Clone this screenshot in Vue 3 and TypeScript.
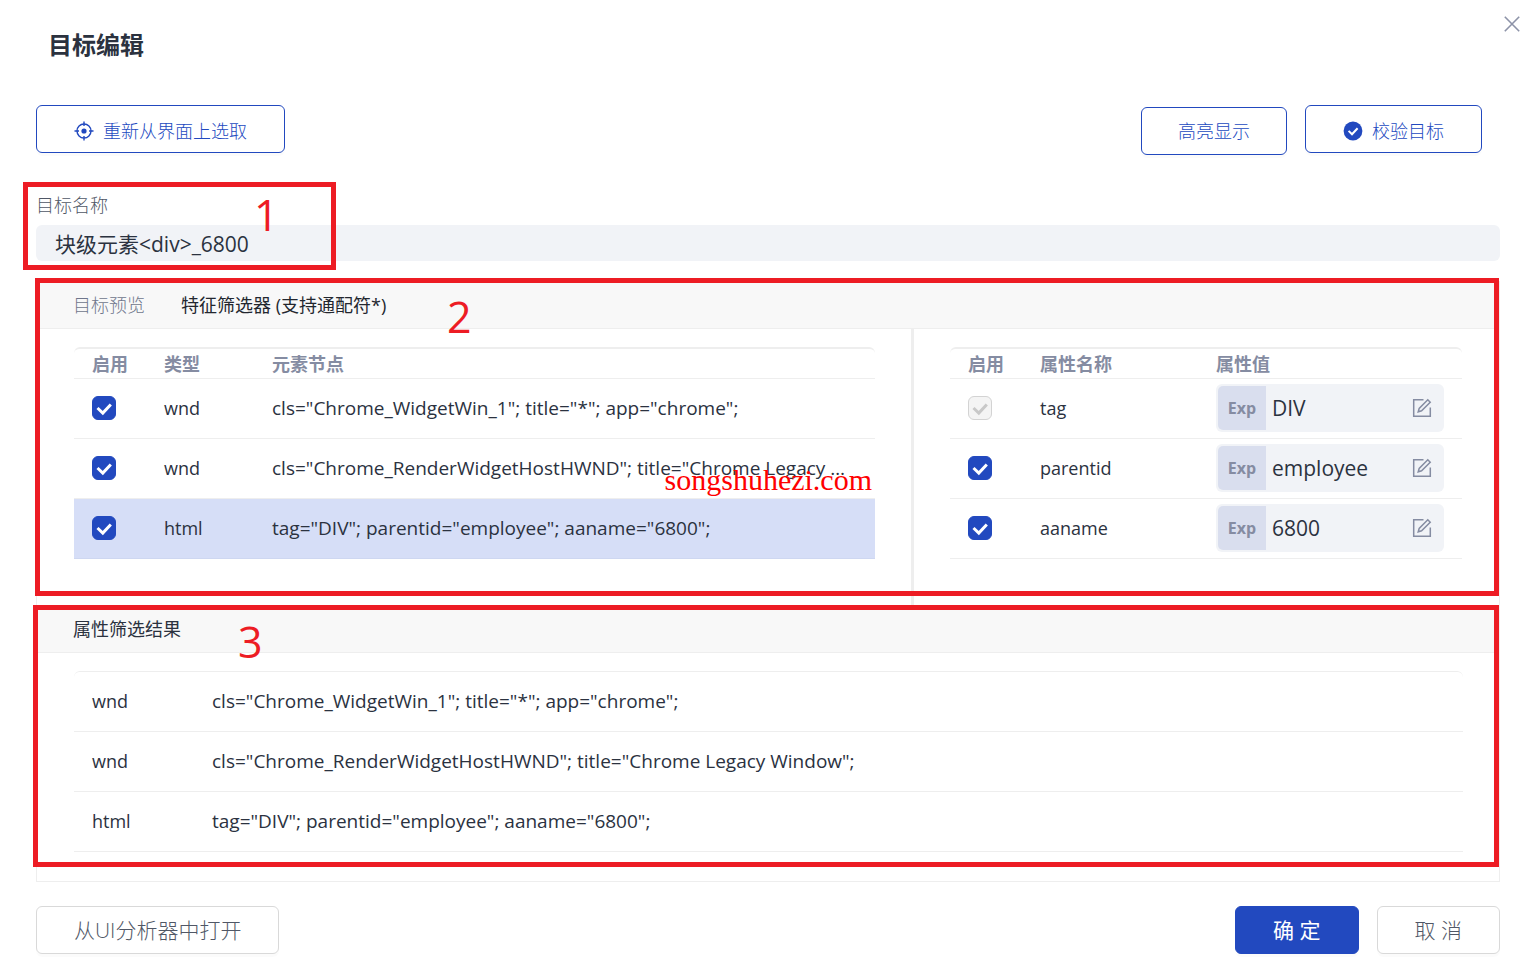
<script setup lang="ts">
import { ref } from 'vue'

interface NodeRow {
  enabled: boolean
  type: string
  selector: string
}

interface AttributeRow {
  enabled: boolean
  locked: boolean
  name: string
  value: string
}

const targetName = ref('块级元素<div>_6800')
const selectedRow = ref(2)

const nodes = ref<NodeRow[]>([
  { enabled: true, type: 'wnd', selector: 'cls="Chrome_WidgetWin_1"; title="*"; app="chrome";' },
  { enabled: true, type: 'wnd', selector: 'cls="Chrome_RenderWidgetHostHWND"; title="Chrome Legacy Window";' },
  { enabled: true, type: 'html', selector: 'tag="DIV"; parentid="employee"; aaname="6800";' },
])

const attributes = ref<AttributeRow[]>([
  { enabled: true, locked: true, name: 'tag', value: 'DIV' },
  { enabled: true, locked: false, name: 'parentid', value: 'employee' },
  { enabled: true, locked: false, name: 'aaname', value: '6800' },
])
</script>

<template>
  <main class="dialog">
    <button class="close" type="button" aria-label="关闭">
      <svg width="16" height="16" viewBox="0 0 16 16" fill="none" stroke="currentColor" stroke-width="1.6">
        <path d="M.8.8 15.2 15.2M15.2.8.8 15.2" />
      </svg>
    </button>

    <h1 class="title">目标编辑</h1>

    <div class="toolbar">
      <button class="btn btn-outline with-icon" type="button">
        <svg width="20" height="20" viewBox="0 0 20 20" fill="none" stroke="currentColor" stroke-width="1.4">
          <circle cx="10" cy="10" r="7" />
          <circle cx="10" cy="10" r="2.6" fill="currentColor" stroke="none" />
          <path d="M10 .5v4.5M10 15v4.5M.5 10H5M15 10h4.5" />
        </svg>
        <span>重新从界面上选取</span>
      </button>
      <div class="toolbar-right">
        <button class="btn btn-outline" type="button"><span>高亮显示</span></button>
        <button class="btn btn-outline with-icon" type="button">
          <svg width="20" height="20" viewBox="0 0 20 20">
            <circle cx="10" cy="10" r="9.4" fill="currentColor" />
            <path d="M5.6 9.9 9 13.2 14.6 7.2" fill="none" stroke="#fff" stroke-width="2" />
          </svg>
          <span>校验目标</span>
        </button>
      </div>
    </div>

    <div class="field">
      <label for="target-name">目标名称</label>
      <input id="target-name" v-model="targetName" type="text" />
      <div class="mark mark-name"><span>1</span></div>
    </div>

    <div class="panel">
      <section class="filter">
        <div class="panel-head" role="tablist">
          <button class="tab" type="button" role="tab" aria-selected="false">目标预览</button>
          <button class="tab active" type="button" role="tab" aria-selected="true">特征筛选器 (支持通配符*)</button>
        </div>
        <div class="split">
          <div class="pane">
            <table class="grid nodes">
              <thead>
                <tr>
                  <th class="c-check">启用</th>
                  <th class="c-type">类型</th>
                  <th>元素节点</th>
                </tr>
              </thead>
              <tbody>
                <tr
                  v-for="(row, i) in nodes"
                  :key="i"
                  :class="{ selected: i === selectedRow }"
                  @click="selectedRow = i"
                >
                  <td>
                    <span class="check">
                      <input v-model="row.enabled" type="checkbox" :aria-label="row.selector" />
                      <svg viewBox="0 0 24 24"><path d="M5.5 12 10.8 17 18.8 8.4" /></svg>
                    </span>
                  </td>
                  <td>{{ row.type }}</td>
                  <td class="selector">{{ row.selector }}</td>
                </tr>
              </tbody>
            </table>
            <div class="watermark">songshuhezi.com</div>
          </div>
          <div class="pane">
            <table class="grid attributes">
              <thead>
                <tr>
                  <th class="c-check">启用</th>
                  <th class="c-name">属性名称</th>
                  <th>属性值</th>
                </tr>
              </thead>
              <tbody>
                <tr v-for="row in attributes" :key="row.name">
                  <td>
                    <span class="check">
                      <input v-model="row.enabled" type="checkbox" :disabled="row.locked" :aria-label="row.name" />
                      <svg viewBox="0 0 24 24"><path d="M5.5 12 10.8 17 18.8 8.4" /></svg>
                    </span>
                  </td>
                  <td>{{ row.name }}</td>
                  <td>
                    <div class="expression">
                      <span class="exp">Exp</span>
                      <input v-model="row.value" type="text" :aria-label="row.name" />
                      <button type="button" aria-label="编辑">
                        <svg width="20" height="20" viewBox="0 0 20 20" fill="none" stroke="currentColor" stroke-width="1.5">
                          <path d="M11.5 1.7H1.7v16.6h16.6V9.5" />
                          <path d="M15.8 1.8 7.2 10.4 6.2 13.8 9.6 12.8 18.2 4.2Z" />
                        </svg>
                      </button>
                    </div>
                  </td>
                </tr>
              </tbody>
            </table>
          </div>
        </div>
        <div class="mark mark-filter"><span>2</span></div>
      </section>

      <section class="results">
        <div class="panel-head">
          <h2>属性筛选结果</h2>
        </div>
        <div class="pane">
          <table class="grid result-grid">
            <tbody>
              <tr v-for="(row, i) in nodes" :key="i">
                <td class="c-result">{{ row.type }}</td>
                <td class="selector">{{ row.selector }}</td>
              </tr>
            </tbody>
          </table>
        </div>
        <div class="mark mark-results"><span>3</span></div>
      </section>
    </div>

    <footer class="footer">
      <button class="btn btn-plain" type="button">从UI分析器中打开</button>
      <div class="footer-right">
        <button class="btn btn-primary" type="button">确 定</button>
        <button class="btn btn-plain" type="button">取 消</button>
      </div>
    </footer>
  </main>
</template>

<style>
body {
  background: #fff;
}
</style>

<style scoped>
* {
  box-sizing: border-box;
}

.dialog {
  position: relative;
  padding: 27px 36px 24px;
  color: #2b323f;
  font-family: 'Open Sans', 'Noto Sans CJK SC', sans-serif;
  font-size: 18px;
  line-height: 28px;
}

button,
input {
  font: inherit;
  color: inherit;
}

.close {
  position: absolute;
  top: 12px;
  right: 12px;
  display: grid;
  place-items: center;
  width: 24px;
  height: 24px;
  padding: 0;
  border: 0;
  background: none;
  color: #8d93a8;
}

.title {
  margin: 0 12px;
  font-size: 24px;
  line-height: 36px;
  font-weight: 700;
}

.toolbar {
  display: flex;
  justify-content: space-between;
  align-items: flex-start;
  height: 50px;
  margin-top: 42px;
}

.toolbar-right {
  display: flex;
  align-items: flex-end;
  gap: 18px;
  height: 50px;
  margin-right: 18px;
}

.btn {
  display: inline-flex;
  align-items: center;
  justify-content: center;
  gap: 9px;
  height: 48px;
  padding: 0 36px;
  border: 1px solid #d9d9d9;
  border-radius: 6px;
  background: #fff;
  box-shadow: 0 3px 0 rgba(0, 0, 0, 0.016);
  font-weight: 300;
  white-space: nowrap;
}

.btn-outline {
  border-color: #2249bf;
  color: #2249bf;
}

.with-icon {
  align-self: flex-start;
  padding: 4px 37px 0;
}

.btn-plain,
.btn-primary {
  padding: 0 37px;
  font-size: 21px;
}

.btn-plain {
  color: #505766;
}

.btn-primary {
  border-color: #2249bf;
  background: #2249bf;
  color: #fff;
  font-weight: 400;
}

.field {
  position: relative;
  display: flex;
  flex-direction: column;
  gap: 6px;
  margin-top: 36px;
}

.field label {
  color: #505766;
  font-weight: 300;
}

.field input {
  width: 100%;
  height: 36px;
  padding: 0 19px;
  border: 0;
  border-radius: 6px;
  background: #f1f3f7;
  font-size: 21px;
}

.panel {
  margin-top: 20px;
  border: 1px solid #eee;
}

.filter,
.results {
  position: relative;
}

.panel-head {
  display: flex;
  align-items: center;
  gap: 36px;
  height: 47px;
  padding: 0 36px;
  border-bottom: 1px solid #eee;
  background: #f8f8f8;
}

.tab {
  padding: 0;
  border: 0;
  background: none;
  color: #6f768c;
  font-weight: 300;
}

.tab.active {
  color: #23272f;
  font-weight: 400;
}

.panel-head h2 {
  margin: 0;
  font-size: 18px;
  font-weight: 400;
}

.split {
  display: grid;
  grid-template-columns: 877fr 585fr;
  height: 276px;
}

.pane {
  position: relative;
  min-width: 0;
  padding: 18px 36px 18px 37px;
}

.split .pane:first-child {
  border-right: 3px solid #eee;
}

.split .pane:last-child {
  padding: 18px 37px 18px 36px;
}

.grid {
  width: 100%;
  border-spacing: 0;
  table-layout: fixed;
  border-top: 1px solid #eee;
  border-radius: 6px 6px 0 0;
}

.nodes,
.attributes {
  border-top-width: 2px;
}

.grid th {
  height: 30px;
  padding: 0 18px;
  border-bottom: 1px solid #eee;
  color: #858ca2;
  font-weight: 700;
  line-height: 28px;
  text-align: left;
  white-space: nowrap;
}

.grid td {
  height: 60px;
  padding: 0 18px 2px;
  border-bottom: 1px solid #eee;
}

.grid .selected td {
  border-color: #ced7f1;
  background: #d6def7;
}

.grid .selector {
  overflow: hidden;
  font-size: 19px;
  text-overflow: ellipsis;
  white-space: nowrap;
}

.c-check {
  width: 72px;
}

.c-type {
  width: 108px;
}

.c-name {
  width: 176px;
}

.c-result {
  width: 120px;
}

.check {
  position: relative;
  display: block;
  width: 24px;
  height: 24px;
}

.check input {
  display: block;
  width: 24px;
  height: 24px;
  margin: 0;
  appearance: none;
  border: 1px solid #d3d3d3;
  border-radius: 6px;
  background: #fff;
}

.check input:checked {
  border-color: #2249bf;
  background: #2249bf;
}

.check input:disabled {
  border-color: #d3d3d3;
  background: #f4f4f4;
}

.check svg {
  position: absolute;
  inset: 0;
  fill: none;
  stroke: #fff;
  stroke-width: 3;
  pointer-events: none;
}

.check input:disabled + svg {
  stroke: #c8c8c8;
}

.check input:not(:checked) + svg {
  display: none;
}

.expression {
  display: flex;
  align-items: center;
  height: 48px;
  padding: 2px;
  border-radius: 6px;
  background: #f1f3f7;
}

.exp {
  flex: none;
  display: grid;
  place-items: center;
  width: 48px;
  height: 44px;
  border-radius: 5px 0 0 5px;
  background: #d9deee;
  color: #858ca2;
  font-size: 16px;
  font-weight: 700;
}

.expression input {
  flex: 1;
  min-width: 0;
  height: 44px;
  padding: 0 6px;
  border: 0;
  background: none;
  font-size: 21px;
}

.expression button {
  flex: none;
  display: grid;
  place-items: center;
  width: 40px;
  height: 44px;
  padding: 0;
  border: 0;
  background: none;
  color: #858ca2;
}

.results {
  border-top: 1px solid #eee;
}

.results .pane {
  padding-bottom: 29px;
}

.footer {
  display: flex;
  justify-content: space-between;
  margin-top: 24px;
}

.footer-right {
  display: flex;
  gap: 18px;
}

/* Red annotation frames with their numbers */
.mark {
  position: absolute;
  z-index: 1;
  border: 5px solid #ed1c24;
  color: #ed1c24;
  font-size: 43px;
  line-height: 48px;
  pointer-events: none;
}

.mark span {
  position: absolute;
}

.mark-name {
  top: -9px;
  bottom: -9px;
  left: -13px;
  width: 313px;
}

.mark-name span {
  top: 4px;
  left: 226px;
}

.mark-filter {
  inset: -4px 0 9px -2px;
}

.mark-filter span {
  top: 10px;
  left: 407px;
}

.mark-results {
  inset: -1px 0 14px -4px;
}

.mark-results span {
  top: 8px;
  left: 200px;
}

.watermark {
  position: absolute;
  top: 134px;
  right: 39px;
  color: #f00;
  font-family: 'Liberation Serif', serif;
  font-size: 30px;
  line-height: 34px;
  pointer-events: none;
}
</style>
